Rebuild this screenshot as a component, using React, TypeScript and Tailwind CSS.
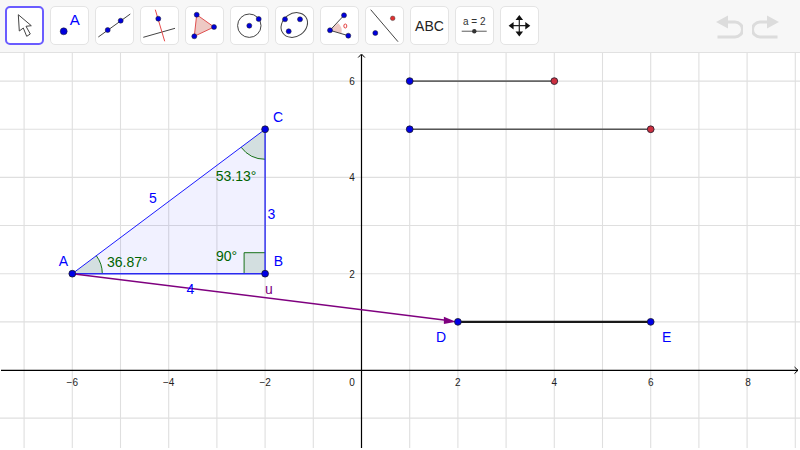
const X = (v: number) => 361.5 + v * 48.2;
const Y = (v: number) => 370 - v * 48.15;

const BLUE = '#0000ff';
const GREEN = '#006400';
const PURPLE = '#7f007f';

function Dot({ cx, cy, r = 3.4, fill = '#0000e6' }: { cx: number; cy: number; r?: number; fill?: string }) {
  return <circle cx={cx} cy={cy} r={r} fill={fill} stroke="#1a1a2a" strokeWidth="0.8" />;
}

function IconDot({ cx, cy, r = 2.5 }: { cx: number; cy: number; r?: number }) {
  return <circle cx={cx} cy={cy} r={r} fill="#0000dc" stroke="#222" strokeWidth="0.5" />;
}

function ToolButton({ active, children }: { active?: boolean; children: React.ReactNode }) {
  return (
    <button
      className={
        active
          ? 'w-[39px] h-[39px] shrink-0 rounded-[5px] bg-white border-2 border-[#6a5cff] flex items-center justify-center'
          : 'w-[39px] h-[39px] shrink-0 rounded-[5px] bg-white border border-[#e4e4e4] flex items-center justify-center'
      }
    >
      {children}
    </button>
  );
}

// coordinates in the icons are measured from the button's outer corner
function Icon({ children }: { children: React.ReactNode }) {
  return (
    <svg className="shrink-0" width="37" height="37" viewBox="1 1 37 37" fill="none">
      {children}
    </svg>
  );
}

function Toolbar() {
  return (
    <div className="h-[53px] bg-[#f7f7f7] border-b border-[#e1e1e1] flex items-start pt-[6px] px-[5px]">
      <div className="flex gap-[6px]">
        <ToolButton active>
          <Icon>
            <path d="M13.3 8.7 L14.3 25 L18.3 22 L21.7 30.3 L25.3 28 L21 20.3 L26.3 19.7 Z" fill="#fff" stroke="#444" strokeWidth="1" strokeLinejoin="round" />
          </Icon>
        </ToolButton>
        <ToolButton>
          <Icon>
            <IconDot cx={13.7} cy={25.3} r={3.5} />
            <text x="19.7" y="19.4" fontSize="15" fill={BLUE} fontFamily="Liberation Sans, sans-serif">A</text>
          </Icon>
        </ToolButton>
        <ToolButton>
          <Icon>
            <path d="M3.3 31 L35.3 8" stroke="#444" strokeWidth="1" />
            <IconDot cx={12.7} cy={24} />
            <IconDot cx={25.7} cy={14.7} />
          </Icon>
        </ToolButton>
        <ToolButton>
          <Icon>
            <path d="M3.3 31.3 L35 22.3" stroke="#444" strokeWidth="1" />
            <path d="M15.3 3.7 L24.7 35.3" stroke="#e64a4a" strokeWidth="1" />
            <IconDot cx={18.3} cy={12.7} />
          </Icon>
        </ToolButton>
        <ToolButton>
          <Icon>
            <path d="M11.7 8.7 L29 21 L9.3 30.3 Z" fill="#eec9c4" stroke="#e05050" strokeWidth="1" />
            <IconDot cx={11.7} cy={8.7} />
            <IconDot cx={29} cy={21} />
            <IconDot cx={9.3} cy={30.3} />
          </Icon>
        </ToolButton>
        <ToolButton>
          <Icon>
            <circle cx="19.3" cy="19.7" r="11.7" stroke="#444" strokeWidth="1" />
            <IconDot cx={19.3} cy={19.7} />
            <IconDot cx={28.7} cy={13} />
          </Icon>
        </ToolButton>
        <ToolButton>
          <Icon>
            <ellipse cx="19.3" cy="19" rx="14" ry="11.5" transform="rotate(-35 19.3 19)" stroke="#444" strokeWidth="1" />
            <IconDot cx={10} cy={13.3} />
            <IconDot cx={25} cy={13.3} />
            <IconDot cx={13.7} cy={25.3} />
          </Icon>
        </ToolButton>
        <ToolButton>
          <Icon>
            <path d="M10 24.3 L18 17 A11 11 0 0 1 21.5 27.5 Z" fill="#eec9c4" />
            <path d="M24 9.3 L10 24.3 L28.3 29.7" stroke="#444" strokeWidth="1" />
            <IconDot cx={24} cy={9.3} />
            <IconDot cx={10} cy={24.3} />
            <IconDot cx={28.3} cy={29.7} />
            <ellipse cx="25.3" cy="20" rx="1.5" ry="2" stroke="#e03030" strokeWidth="0.9" />
          </Icon>
        </ToolButton>
        <ToolButton>
          <Icon>
            <path d="M5.7 3.7 L33 35.7" stroke="#444" strokeWidth="1" />
            <IconDot cx={10.3} cy={27} />
            <circle cx="27.7" cy="12.3" r="2.3" fill="#e03030" stroke="#444" strokeWidth="0.5" />
          </Icon>
        </ToolButton>
        <ToolButton>
          <span className="text-[14px] leading-none text-[#222] font-['Liberation_Sans',sans-serif]">ABC</span>
        </ToolButton>
        <ToolButton>
          <Icon>
            <text x="19.3" y="18.7" textAnchor="middle" fontSize="10" fill="#333" fontFamily="Liberation Sans, sans-serif">a = 2</text>
            <path d="M6.7 25.3 L31.7 25.3" stroke="#8a8a8a" strokeWidth="1.4" />
            <circle cx="19.3" cy="25.3" r="2.2" fill="#333" />
          </Icon>
        </ToolButton>
        <ToolButton>
          <Icon>
            <path d="M19.3 12 L19.3 27.5 M11.5 19.7 L27 19.7" stroke="#222" strokeWidth="1.2" />
            <path d="M19.3 9 L15.5 14 L23.1 14 Z M19.3 30.5 L15.5 25.5 L23.1 25.5 Z M8.6 19.7 L13.6 15.9 L13.6 23.5 Z M30.3 19.7 L25.3 15.9 L25.3 23.5 Z" fill="#111" />
          </Icon>
        </ToolButton>
      </div>
      <div className="ml-auto mr-[16px] mt-[9px] flex gap-[9px]">
        <svg width="27" height="24" viewBox="0 0 27 24" fill="none">
          <path d="M10 7 L19 7 A7.5 7.5 0 0 1 19 22 L1.5 22" stroke="#dcdcdc" strokeWidth="3" />
          <path d="M0 7 L12 0.5 L12 13.5 Z" fill="#dcdcdc" />
        </svg>
        <svg width="27" height="24" viewBox="0 0 27 24" fill="none">
          <path d="M17 7 L8 7 A7.5 7.5 0 0 0 8 22 L25.5 22" stroke="#dcdcdc" strokeWidth="3" />
          <path d="M27 7 L15 0.5 L15 13.5 Z" fill="#dcdcdc" />
        </svg>
      </div>
    </div>
  );
}

function Label({ x, y, fill = BLUE, size = 14, children }: { x: number; y: number; fill?: string; size?: number; children: React.ReactNode }) {
  return (
    <text x={x} y={y} fill={fill} fontSize={size} textAnchor="middle" fontFamily="Liberation Sans, sans-serif">
      {children}
    </text>
  );
}

function Graph() {
  const xs = [-7, -6, -5, -4, -3, -2, -1, 1, 2, 3, 4, 5, 6, 7, 8, 9];
  const ys = [-1, 1, 2, 3, 4, 5, 6];
  const xTicks = [-6, -4, -2, 2, 4, 6, 8];
  const yTicks = [2, 4, 6];
  const ax = X(-6), ay = Y(2), bx = X(-2), by = Y(2), cx = X(-2), cy = Y(5);
  const dx = X(2), dy = Y(1), ex = X(6);

  return (
    <svg className="block" width="800" height="397" viewBox="0 53 800 397">
      {xs.map(v => (
        <line key={v} x1={X(v)} y1="53" x2={X(v)} y2="448" stroke="#dfdfdf" strokeWidth="1.1" />
      ))}
      {ys.map(v => (
        <line key={v} x1="0" y1={Y(v)} x2="800" y2={Y(v)} stroke="#dfdfdf" strokeWidth="1.1" />
      ))}

      {/* axes */}
      <line x1="1" y1="370.3" x2="798" y2="370.3" stroke="#000" strokeWidth="1.2" />
      <path d="M794.5 367 L798 370.3 L794.5 373.6" stroke="#000" strokeWidth="1" fill="none" />
      <line x1="361.5" y1="448" x2="361.5" y2="55" stroke="#000" strokeWidth="1.2" />
      <path d="M358.2 57.5 L361.5 54 L364.8 57.5" stroke="#000" strokeWidth="1" fill="none" />
      {xTicks.map(v => (
        <text key={v} x={X(v) + (v === 8 ? 1 : 0)} y="385.5" fontSize="10" fill="#222" textAnchor="middle" fontFamily="Liberation Sans, sans-serif">
          {v < 0 ? `\u2212${-v}` : v}
        </text>
      ))}
      <text x="352" y="385.5" fontSize="10" fill="#222" textAnchor="middle" fontFamily="Liberation Sans, sans-serif">0</text>
      {yTicks.map(v => (
        <text key={v} x="352" y={Y(v) + 4} fontSize="10" fill="#222" textAnchor="middle" fontFamily="Liberation Sans, sans-serif">{v}</text>
      ))}

      {/* triangle */}
      <path d={`M${ax} ${ay} L${bx} ${by} L${cx} ${cy} Z`} fill="#0000ff" fillOpacity="0.055" stroke="none" />

      {/* angles */}
      <path d={`M${ax} ${ay} L${ax + 30} ${ay} A30 30 0 0 0 ${ax + 24} ${ay - 18} Z`} fill="#006400" fillOpacity="0.12" />
      <path d={`M${ax + 30} ${ay} A30 30 0 0 0 ${ax + 24} ${ay - 18}`} fill="none" stroke={GREEN} strokeWidth="0.9" />
      <path d={`M${cx} ${cy} L${cx} ${cy + 30} A30 30 0 0 1 ${cx - 24} ${cy + 18} Z`} fill="#006400" fillOpacity="0.12" />
      <path d={`M${cx} ${cy + 30} A30 30 0 0 1 ${cx - 24} ${cy + 18}`} fill="none" stroke={GREEN} strokeWidth="0.9" />
      <path d={`M${bx - 21} ${by} L${bx - 21} ${by - 21} L${bx} ${by - 21} L${bx} ${by} Z`} fill="#006400" fillOpacity="0.12" />
      <path d={`M${bx - 21} ${by} L${bx - 21} ${by - 21} L${bx} ${by - 21}`} fill="none" stroke={GREEN} strokeWidth="0.9" />

      <line x1={ax} y1={ay} x2={cx} y2={cy} stroke={BLUE} strokeWidth="0.9" />
      <line x1={ax} y1={ay} x2={bx} y2={by} stroke="#2a2af0" strokeWidth="1.4" />
      <line x1={bx} y1={by} x2={cx} y2={cy} stroke="#2a2af0" strokeWidth="1.4" />

      {/* segments */}
      <line x1={X(1)} y1={Y(6)} x2={X(4)} y2={Y(6)} stroke="#666" strokeWidth="1.8" />
      <line x1={X(1)} y1={Y(5)} x2={X(6)} y2={Y(5)} stroke="#555" strokeWidth="1.4" />
      <line x1={dx} y1={dy} x2={ex} y2={dy} stroke="#1a1a1a" strokeWidth="2.2" />

      {/* vector u */}
      <line x1={ax} y1={ay} x2={dx - 10} y2={dy - 1.4} stroke={PURPLE} strokeWidth="1.4" />
      <path d={`M${dx - 2} ${dy} L${dx - 14} ${dy + 2.2} L${dx - 14} ${dy - 5.2} Z`} fill={PURPLE} />

      <Dot cx={ax} cy={ay} />
      <Dot cx={bx} cy={by} />
      <Dot cx={cx} cy={cy} />
      <Dot cx={dx} cy={dy} />
      <Dot cx={ex} cy={dy} />
      <Dot cx={X(1)} cy={Y(6)} />
      <Dot cx={X(1)} cy={Y(5)} />
      <Dot cx={X(4)} cy={Y(6)} fill="#cc3040" />
      <Dot cx={X(6)} cy={Y(5)} fill="#cc3040" />

      {/* labels */}
      <Label x={63.5} y={265.7}>A</Label>
      <Label x={278.5} y={265.7}>B</Label>
      <Label x={278} y={121.7}>C</Label>
      <Label x={441} y={341.7}>D</Label>
      <Label x={666.7} y={341.7}>E</Label>
      <Label x={153} y={202.7}>5</Label>
      <Label x={271.5} y={219}>3</Label>
      <Label x={190.5} y={293.7}>4</Label>
      <Label x={269} y={294} fill={PURPLE}>u</Label>
      <Label x={127.3} y={267} fill={GREEN}>36.87°</Label>
      <Label x={236} y={180.7} fill={GREEN}>53.13°</Label>
      <Label x={226.5} y={260.7} fill={GREEN}>90°</Label>
    </svg>
  );
}

export default function App() {
  return (
    <div className="w-[800px] h-[450px] bg-white overflow-hidden">
      <Toolbar />
      <Graph />
    </div>
  );
}
